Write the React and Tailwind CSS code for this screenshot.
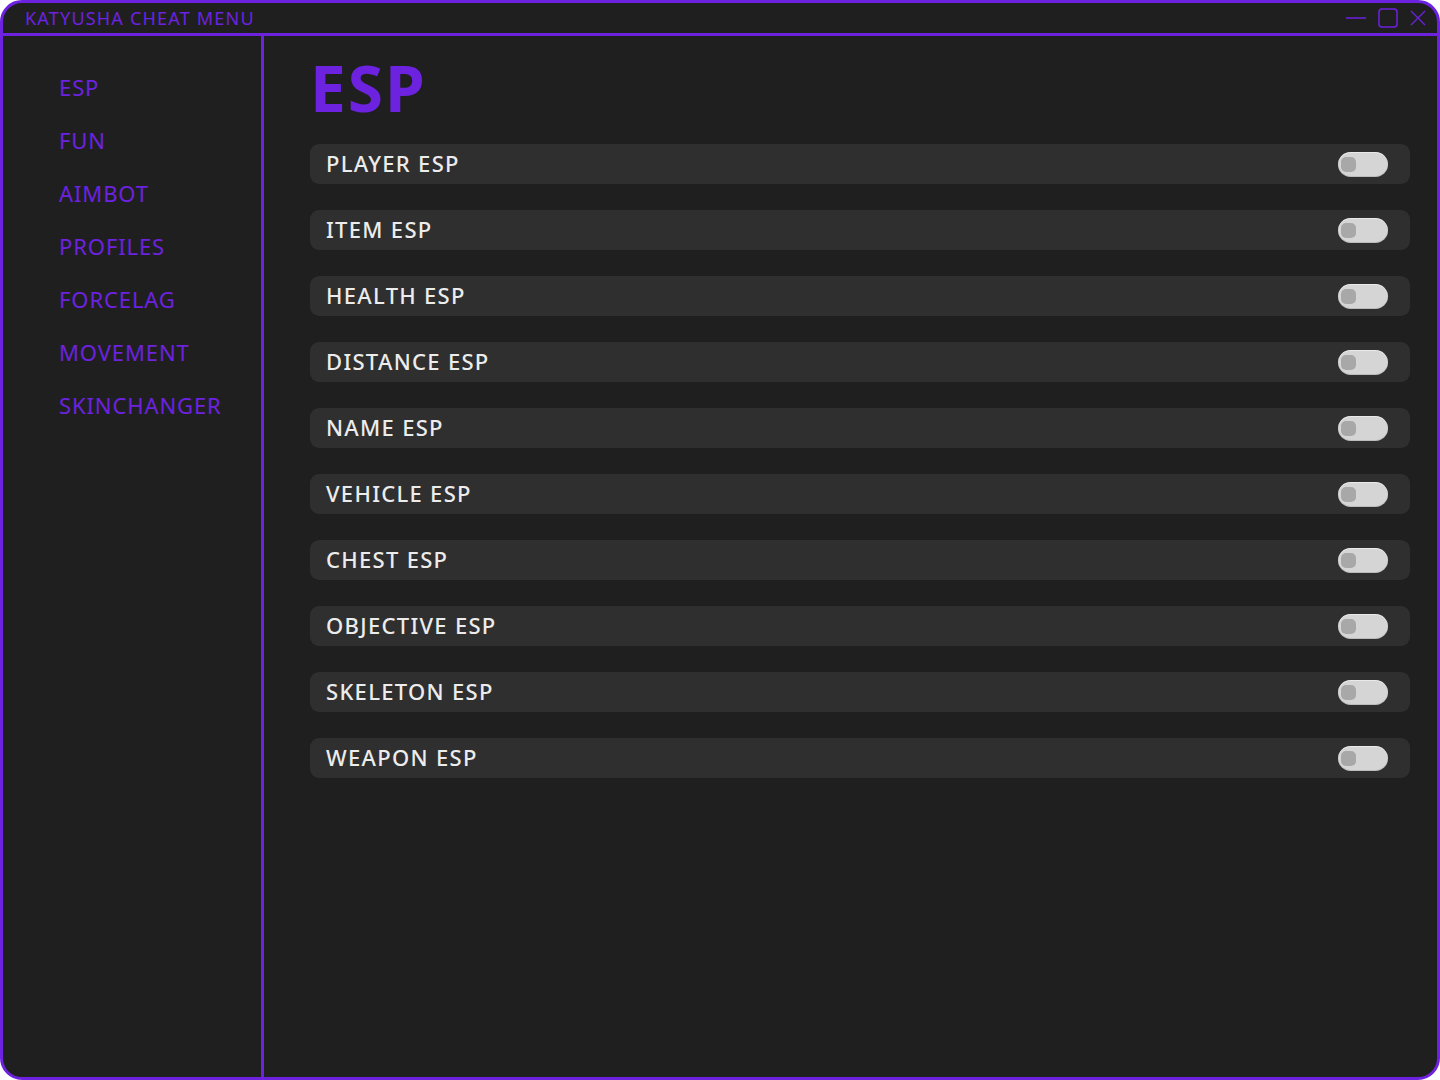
import React from 'react'

const NAV = ['ESP', 'FUN', 'AIMBOT', 'PROFILES', 'FORCELAG', 'MOVEMENT', 'SKINCHANGER']
const OPTIONS = [
  'PLAYER ESP',
  'ITEM ESP',
  'HEALTH ESP',
  'DISTANCE ESP',
  'NAME ESP',
  'VEHICLE ESP',
  'CHEST ESP',
  'OBJECTIVE ESP',
  'SKELETON ESP',
  'WEAPON ESP',
]

function Toggle() {
  return (
    <div className="flex h-[25px] w-[50px] items-center rounded-full bg-[#d5d5d5] pl-[3px] shadow-[inset_0_1px_0_rgba(255,255,255,0.5),inset_0_-1px_0_rgba(0,0,0,0.12)]">
      <div className="h-[15px] w-[15px] rounded-[5px] bg-[#a8a8a8]"></div>
    </div>
  )
}

function WindowControls() {
  return (
    <div className="flex items-center">
      <svg width="22" height="22" viewBox="0 0 22 22" className="mr-[11px]">
        <line x1="1" y1="11" x2="21" y2="11" stroke="#6d22e0" strokeWidth="1.5" />
      </svg>
      <svg width="20" height="22" viewBox="0 0 20 22" className="mr-[11px]">
        <rect x="1" y="2" width="18" height="18" rx="3" fill="none" stroke="#6d22e0" strokeWidth="1.5" />
      </svg>
      <svg width="18" height="22" viewBox="0 0 18 22">
        <path d="M2 4 L16 18 M16 4 L2 18" stroke="#6d22e0" strokeWidth="1.3" fill="none" />
      </svg>
    </div>
  )
}

export default function App() {
  return (
    <div className="h-[1080px] w-[1440px] bg-white" style={{ fontFamily: '"Noto Sans", sans-serif' }}>
      <div className="flex h-full w-full flex-col overflow-hidden rounded-[22px] border-[3px] border-[#6d22e0] bg-[#1f1f1f]">
        {/* title bar */}
        <div className="flex h-[33px] shrink-0 items-center justify-between border-b-[3px] border-[#6d22e0] pl-[22px] pr-[10px]">
          <span className="text-[18px] leading-none tracking-[1.2px] text-[#6d22e0]">KATYUSHA CHEAT MENU</span>
          <WindowControls />
        </div>

        <div className="flex flex-1">
          {/* sidebar */}
          <div className="flex w-[261px] shrink-0 flex-col border-r-[3px] border-[#6d22e0] pl-[56px] pt-[25px]">
            {NAV.map((item) => (
              <div key={item} className="text-[22px] leading-[53px] tracking-[0.9px] text-[#6d22e0]">
                {item}
              </div>
            ))}
          </div>

          {/* main */}
          <div className="flex flex-1 flex-col pl-[46px] pr-[27px] pt-[20px]">
            <h1 className="mb-[24px] text-[64px] font-bold leading-[64px] tracking-[2px] text-[#6d22e0]">ESP</h1>
            <div className="flex flex-col gap-[26px]">
              {OPTIONS.map((opt) => (
                <div
                  key={opt}
                  className="flex h-[40px] items-center justify-between rounded-[9px] bg-[#2f2f2f] pl-[16px] pr-[22px]"
                >
                  <span className="pb-[3px] text-[22px] font-medium leading-none tracking-[1.3px] text-[#ececec]">{opt}</span>
                  <Toggle />
                </div>
              ))}
            </div>
          </div>
        </div>
      </div>
    </div>
  )
}
